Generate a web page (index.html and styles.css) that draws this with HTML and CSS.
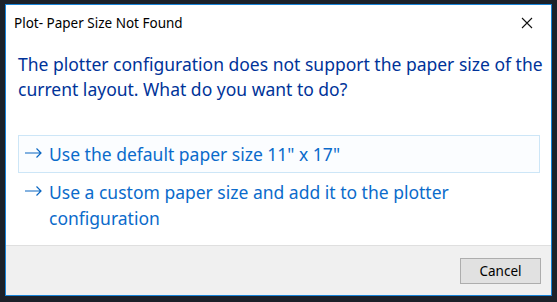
FILE: index.html
```html
<!DOCTYPE html>
<html lang="en">
<head>
    <meta charset="UTF-8">
    <title>Plot- Paper Size Not Found</title>
    <link rel="stylesheet" href="styles.css">
</head>
<body>
    <div class="dialog">
        <div class="titlebar">
            <span class="title">Plot- Paper Size Not Found</span>
            <button class="close" aria-label="Close">
                <svg width="12" height="12" viewBox="0 0 12 12">
                    <path d="M1 1 L11 11 M11 1 L1 11" stroke="#111" stroke-width="1.1" fill="none"/>
                </svg>
            </button>
        </div>

        <div class="content">
            <p class="instruction">The plotter configuration does not support the paper size of the current layout. What do you want to do?</p>

            <div class="links">
                <a class="command-link hovered" href="#">
                    <svg class="arrow" width="17" height="10" viewBox="0 0 17 10">
                        <path d="M0 5 H16 M11.5 0.5 L16 5 L11.5 9.5" stroke="#0a66c2" stroke-width="1.2" fill="none"/>
                    </svg>
                    <span>Use the default paper size 11" x 17"</span>
                </a>
                <a class="command-link" href="#">
                    <svg class="arrow" width="17" height="10" viewBox="0 0 17 10">
                        <path d="M0 5 H16 M11.5 0.5 L16 5 L11.5 9.5" stroke="#0a66c2" stroke-width="1.2" fill="none"/>
                    </svg>
                    <span>Use a custom paper size and add it to the plotter configuration</span>
                </a>
            </div>
        </div>

        <div class="footer">
            <button class="btn">Cancel</button>
        </div>
    </div>
</body>
</html>
```

FILE: styles.css
```css
/* Dialog window */
body {
    margin: 0;
    padding: 4px 0 0 5px;
    background: #1c2129;
    font-family: 'Noto Sans', 'Open Sans', sans-serif;
}

.dialog {
    width: 545px;
    height: 290px;
    background: #fff;
    border: 1px solid #1883d7;
    display: flex;
    flex-direction: column;
}

.titlebar {
    height: 31px;
    display: flex;
    align-items: center;
    justify-content: space-between;
    padding-left: 8px;
}

.title {
    font-size: 13.5px;
    color: #000;
    margin-top: 4px;
}

.close {
    width: 46px;
    height: 31px;
    border: none;
    background: none;
    display: flex;
    align-items: center;
    justify-content: center;
    padding: 0;
    margin-top: 4px;
    margin-right: 1px;
}

.content {
    flex: 1;
    padding: 0 2px 0 12px;
}

.instruction {
    margin: 16px 0 0;
    color: #003399;
    font-size: 17.5px;
    line-height: 25px;
}

.links {
    margin-top: 33px;
    margin-right: 9px;
    display: flex;
    flex-direction: column;
}

.command-link {
    display: flex;
    align-items: flex-start;
    gap: 7px;
    padding: 5px 8px 5px 6px;
    border: 1px solid transparent;
    color: #0b6bcb;
    text-decoration: none;
    font-size: 17.5px;
    line-height: 26px;
}

.command-link.hovered {
    border-color: #cde6f7;
    background: #fbfdff;
}

.arrow {
    margin-top: 7px;
    flex-shrink: 0;
}

/* Footer with buttons */
.footer {
    height: 49px;
    background: #f0f0f0;
    border-top: 1px solid #dfdfdf;
    display: flex;
    align-items: center;
    justify-content: flex-end;
    padding-right: 10px;
}

.btn {
    width: 81px;
    height: 26px;
    background: #e1e1e1;
    border: 1px solid #adadad;
    font-family: 'Noto Sans', 'Open Sans', sans-serif;
    font-size: 13.5px;
    color: #000;
    padding: 0;
}
```
